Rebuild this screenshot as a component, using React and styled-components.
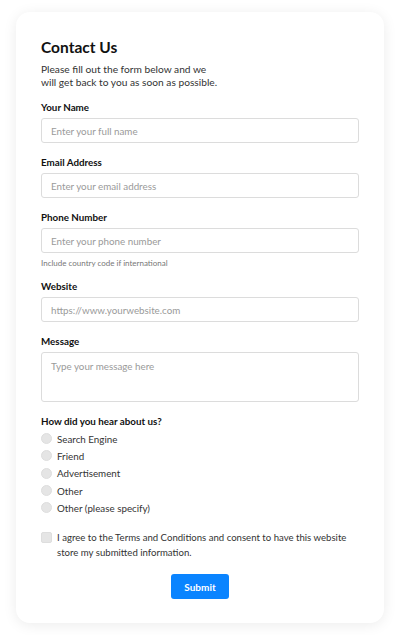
import React from 'react';
import styled, { createGlobalStyle } from 'styled-components';

const GlobalStyle = createGlobalStyle`
  body {
    margin: 0;
    background: #ffffff;
    font-family: Lato, "Noto Sans", sans-serif;
  }
  * { box-sizing: border-box; }
`;

const Page = styled.div`
  padding: 12px 16px;
`;

const Card = styled.form`
  background: #fff;
  border-radius: 14px;
  box-shadow: 0 2px 14px rgba(0, 0, 0, 0.08);
  padding: 25px 25px 24px;
  display: flex;
  flex-direction: column;
`;

const Title = styled.h1`
  font-size: 15.5px;
  font-weight: 700;
  color: #111;
  margin: 0 0 6px;
  line-height: 20px;
`;

const Intro = styled.p`
  font-size: 10.2px;
  line-height: 13px;
  color: #333;
  margin: 0 0 11px;
`;

const Field = styled.div`
  display: flex;
  flex-direction: column;
  margin-bottom: ${(p) => p.$gap || 12}px;
`;

const Label = styled.label`
  font-size: 9.8px;
  font-weight: 700;
  color: #111;
  line-height: 14px;
  margin-bottom: 4px;
`;

const Input = styled.input`
  height: 25px;
  border: 1px solid #dcdcdc;
  border-radius: 3px;
  padding: 0 9px;
  font-family: inherit;
  font-size: 9.8px;
  color: #333;
  &::placeholder { color: #9a9a9a; }
`;

const TextArea = styled.textarea`
  height: 50px;
  border: 1px solid #dcdcdc;
  border-radius: 3px;
  padding: 7px 9px;
  font-family: inherit;
  font-size: 9.8px;
  resize: none;
  &::placeholder { color: #9a9a9a; }
`;

const Hint = styled.span`
  font-size: 8px;
  color: #777;
  line-height: 10px;
  margin-top: 5px;
`;

const RadioList = styled.div`
  display: flex;
  flex-direction: column;
  margin-top: -2px;
  margin-bottom: 14px;
`;

const Option = styled.label`
  display: flex;
  align-items: center;
  gap: 5px;
  height: 17.3px;
  font-size: 9.8px;
  color: #333;
`;

const Dot = styled.span`
  width: 11px;
  height: 11px;
  border-radius: 50%;
  background: #e5e5e5;
  border: 1px solid #dedede;
  flex-shrink: 0;
`;

const Agree = styled.label`
  display: flex;
  gap: 5px;
  font-size: 9.6px;
  line-height: 15px;
  color: #333;
  margin-bottom: 14px;
`;

const Box = styled.span`
  width: 11px;
  height: 11px;
  border-radius: 2px;
  background: #e5e5e5;
  border: 1px solid #dedede;
  flex-shrink: 0;
  margin-top: 2px;
`;

const Submit = styled.button`
  align-self: center;
  width: 58px;
  height: 25px;
  border: none;
  border-radius: 3px;
  background: #0a84ff;
  color: #fff;
  font-family: inherit;
  font-size: 10px;
  font-weight: 700;
`;

const sources = ['Search Engine', 'Friend', 'Advertisement', 'Other', 'Other (please specify)'];

const App = () => (
  <Page>
    <GlobalStyle />
    <Card onSubmit={(e) => e.preventDefault()}>
      <Title>Contact Us</Title>
      <Intro>
        Please fill out the form below and we
        <br />
        will get back to you as soon as possible.
      </Intro>

      <Field>
        <Label>Your Name</Label>
        <Input placeholder="Enter your full name" />
      </Field>
      <Field>
        <Label>Email Address</Label>
        <Input placeholder="Enter your email address" />
      </Field>
      <Field $gap={11}>
        <Label>Phone Number</Label>
        <Input placeholder="Enter your phone number" />
        <Hint>Include country code if international</Hint>
      </Field>
      <Field>
        <Label>Website</Label>
        <Input placeholder="https://www.yourwebsite.com" />
      </Field>
      <Field>
        <Label>Message</Label>
        <TextArea placeholder="Type your message here" />
      </Field>

      <Label>How did you hear about us?</Label>
      <RadioList>
        {sources.map((s) => (
          <Option key={s}>
            <Dot />
            {s}
          </Option>
        ))}
      </RadioList>

      <Agree>
        <Box />
        <span>I agree to the Terms and Conditions and consent to have this website store my submitted information.</span>
      </Agree>

      <Submit type="submit">Submit</Submit>
    </Card>
  </Page>
);

export default App;
